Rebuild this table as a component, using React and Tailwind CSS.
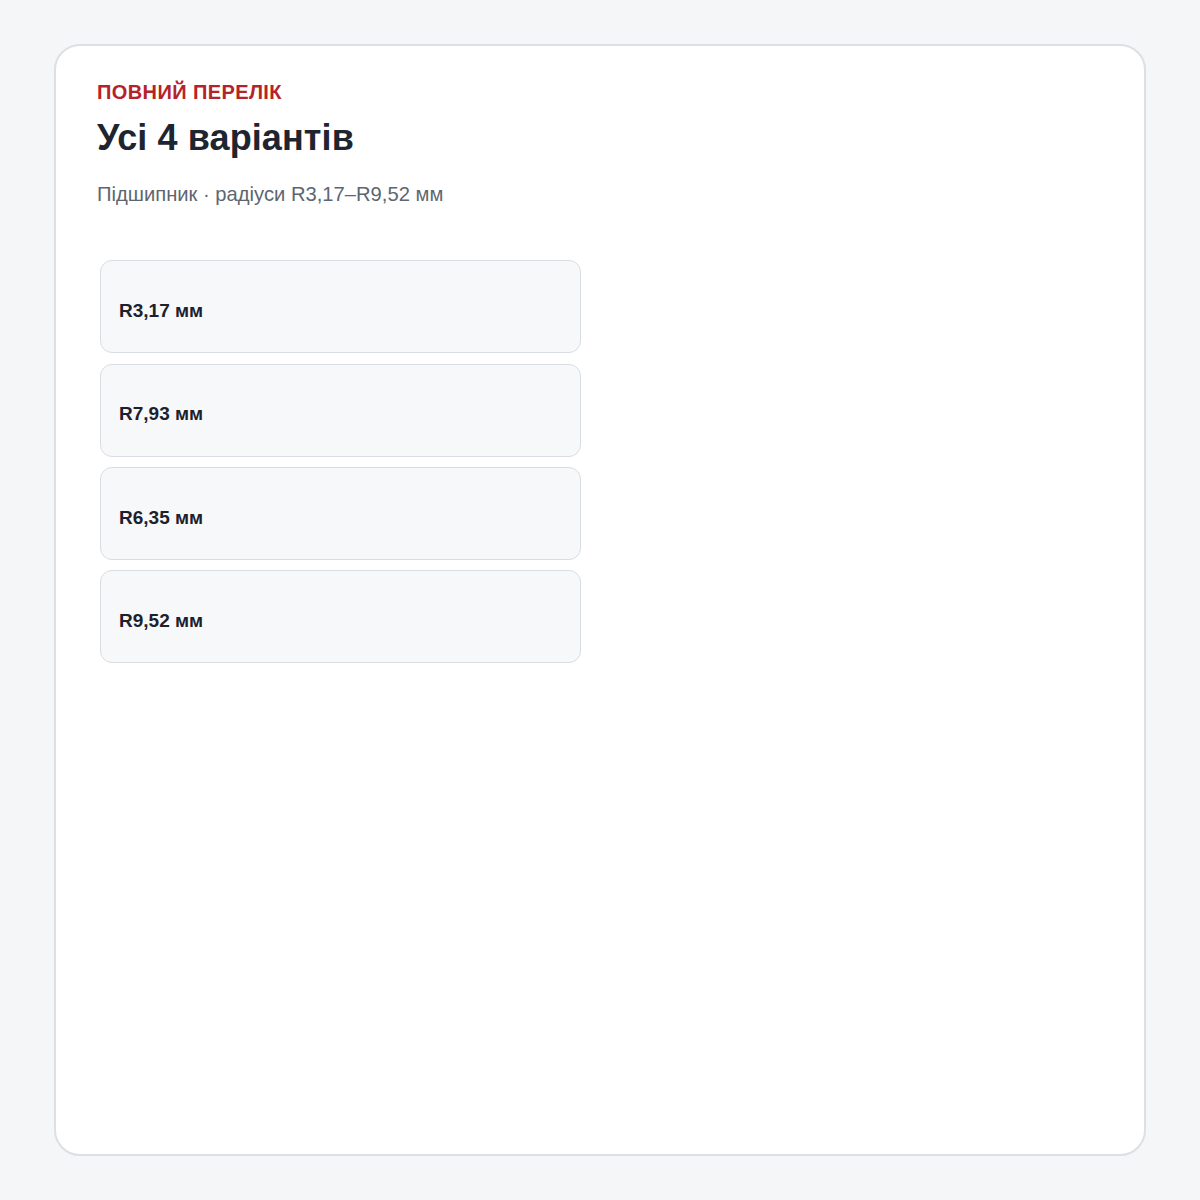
const variants = ["R3,17 мм", "R7,93 мм", "R6,35 мм", "R9,52 мм"];

export default function App() {
  return (
    <div className="min-h-[1200px] bg-[#f5f6f8] p-[44px_54px] font-['Liberation_Sans',Arial,sans-serif]">
      <div className="h-[1112px] rounded-[26px] border-2 border-[#dcdfe4] bg-white px-[41px] pt-[36px]">
        <div className="text-[20px] font-bold leading-none tracking-[0.4px] text-[#b5232a]">ПОВНИЙ ПЕРЕЛІК</div>
        <h1 className="mt-[18px] text-[36px] font-bold leading-none tracking-[0.1px] text-[#1e2530]">Усі 4 варіантів</h1>
        <p className="mt-[28px] text-[20.2px] leading-none text-[#5d6670]">Підшипник · радіуси R3,17–R9,52 мм</p>
        <div className="mt-[56px] ml-[3px] flex w-[481px] flex-col gap-[10.3px]">
          {variants.map((v) => (
            <div key={v} className="flex h-[93px] items-center rounded-[12px] border border-[#d9dce2] bg-[#f7f8fa] px-[18px] pt-[9px]">
              <span className="text-[19px] font-bold text-[#1b222c]">{v}</span>
            </div>
          ))}
        </div>
      </div>
    </div>
  );
}
